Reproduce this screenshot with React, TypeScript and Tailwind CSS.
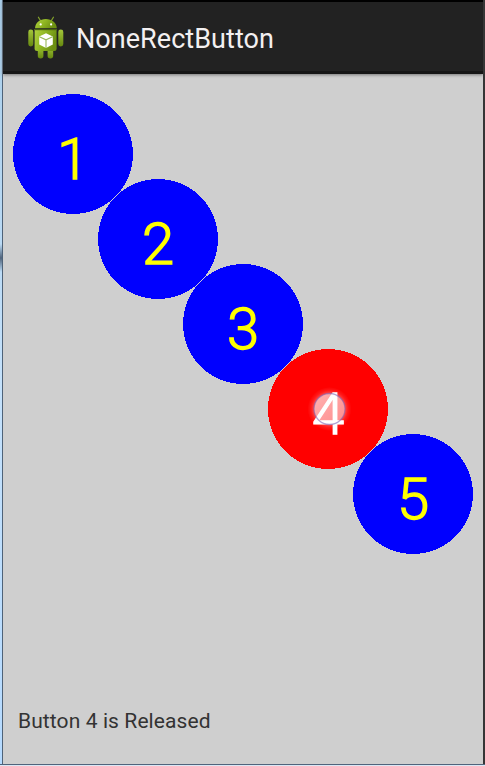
import React from "react";

function AndroidIcon() {
  return (
    <svg width="38" height="44" viewBox="0 0 38 44" className="shrink-0">
      <defs>
        <linearGradient id="body" x1="0" y1="0" x2="1" y2="0.35">
          <stop offset="0" stopColor="#b2d340" />
          <stop offset="0.5" stopColor="#8fb622" />
          <stop offset="1" stopColor="#6c8f12" />
        </linearGradient>
        <linearGradient id="limb" x1="0" y1="0" x2="0" y2="1">
          <stop offset="0" stopColor="#a4c63a" />
          <stop offset="1" stopColor="#66890f" />
        </linearGradient>
      </defs>
      <g stroke="#85a52b" strokeWidth="1.2" strokeLinecap="round">
        <path d="M13.4 5.5 11.4 2.2M24.4 5.5 26.4 2.2" />
      </g>
      <rect x="1.3" y="14.5" width="5" height="17" rx="2.4" fill="url(#limb)" />
      <rect x="31.3" y="14.5" width="5" height="17" rx="2.4" fill="url(#limb)" />
      <rect x="10.8" y="31" width="5.6" height="12.4" rx="2.7" fill="url(#limb)" />
      <rect x="20.6" y="31" width="5.6" height="12.4" rx="2.7" fill="url(#limb)" />
      <path d="M7.6 14h22v19.5a2.5 2.5 0 0 1-2.5 2.5h-17a2.5 2.5 0 0 1-2.5-2.5z" fill="url(#body)" />
      <path d="M7.6 14.6h22" stroke="#486211" strokeWidth="1.2" />
      <path d="M8 13.2C8.3 7.5 13 4 18.8 4s10.7 3.5 11 9.2z" fill="url(#body)" />
      <circle cx="13.7" cy="9.4" r="1.1" fill="#fff" />
      <circle cx="24.1" cy="9.4" r="1.1" fill="#fff" />
      <path d="m19 18.2 6.8 3.2v8L19 33l-6.8-3.6v-8z" fill="#fff" />
      <path d="m12.4 21.8 6.6 3 6.6-3M19 24.8V33" fill="none" stroke="#9bb85b" strokeWidth="1.1" />
    </svg>
  );
}

function TouchMark() {
  return (
    <svg width="48" height="48" viewBox="0 0 48 48" className="absolute top-9 left-[37px] z-20">
      <defs>
        <radialGradient id="halo">
          <stop offset="0.7" stopColor="#fff" stopOpacity="0.28" />
          <stop offset="0.84" stopColor="#fff" stopOpacity="0.1" />
          <stop offset="1" stopColor="#fff" stopOpacity="0" />
        </radialGradient>
        <linearGradient id="touch" x1="0" y1="0" x2="1" y2="1">
          <stop offset="0" stopColor="#fff" stopOpacity="0.7" />
          <stop offset="1" stopColor="#fff" stopOpacity="0.55" />
        </linearGradient>
      </defs>
      <path d="M2.5 24a22 22 0 1 0 44 0a22 22 0 1 0-44 0M9 24a15.5 15.5 0 1 1 31 0a15.5 15.5 0 1 1-31 0" fill="url(#halo)" fillRule="evenodd" />
      <circle cx="24.5" cy="24" r="15.5" fill="url(#touch)" stroke="#8066b8" strokeOpacity="0.6" strokeWidth="1.3" />
    </svg>
  );
}

const buttons = [
  { label: "1", indent: "ml-0" },
  { label: "2", indent: "ml-[85px]" },
  { label: "3", indent: "ml-[170px]" },
  { label: "4", indent: "ml-[255px]", pressed: true },
  { label: "5", indent: "ml-[340px]" },
];

function RoundButton({ label, indent, pressed }: { label: string; indent: string; pressed?: boolean }) {
  return (
    <div className={`h-[85px] ${indent}`}>
      <button className="relative grid size-[120px] place-items-center">
        <svg width="120" height="120" className={`col-start-1 row-start-1 ${pressed ? "fill-[#ff0000]" : "fill-[#0000ff]"}`}>
          <circle cx="60" cy="60" r="60" shapeRendering="crispEdges" />
        </svg>
        <span
          className={`z-10 col-start-1 row-start-1 pt-[9px] text-[58px] leading-none font-light [-webkit-text-stroke:1.3px_currentColor] ${pressed ? "text-white" : "text-[#ffff00]"}`}
        >
          {label}
        </span>
        {pressed && <TouchMark />}
      </button>
    </div>
  );
}

export default function App() {
  return (
    <div className="flex h-[766px] w-[485px] flex-col overflow-hidden bg-[#dce8f5] font-[Roboto,sans-serif]">
      <div className="flex h-[764px]">
        <div className="flex w-[2px] flex-col bg-linear-to-b from-[#a8cde9] via-[#c4e1fb] to-[#b5daff] pt-[244px]">
          <div className="h-7 bg-linear-to-b from-transparent via-[#50647c] to-transparent" />
        </div>
        <div className="w-px bg-[#4e6278]" />
        <main className="flex w-[480px] flex-col bg-[#cfcfcf]">
          <header className="flex h-[74px] shrink-0 items-center border-t-2 border-b-3 border-t-black border-b-[#161616] bg-[#222222] pl-6 shadow-[0_1px_3px_#777777]">
            <AndroidIcon />
            <h1 className="ml-[11px] pt-[5px] text-[27px] leading-8 tracking-[0.05px] whitespace-nowrap text-[#f3f0f1]">NoneRectButton</h1>
          </header>
          <section className="h-[608px] pt-5 pl-[10px]">
            {buttons.map((b) => (
              <RoundButton key={b.label} {...b} />
            ))}
          </section>
          <p className="pt-[25px] pl-[15px] text-[21px] leading-7 tracking-[0.1px] text-[#333333]">Button 4 is Released</p>
        </main>
        <div className="w-[2px] bg-[#363636]" />
      </div>
      <div className="h-px bg-[#50647c]" />
    </div>
  );
}
